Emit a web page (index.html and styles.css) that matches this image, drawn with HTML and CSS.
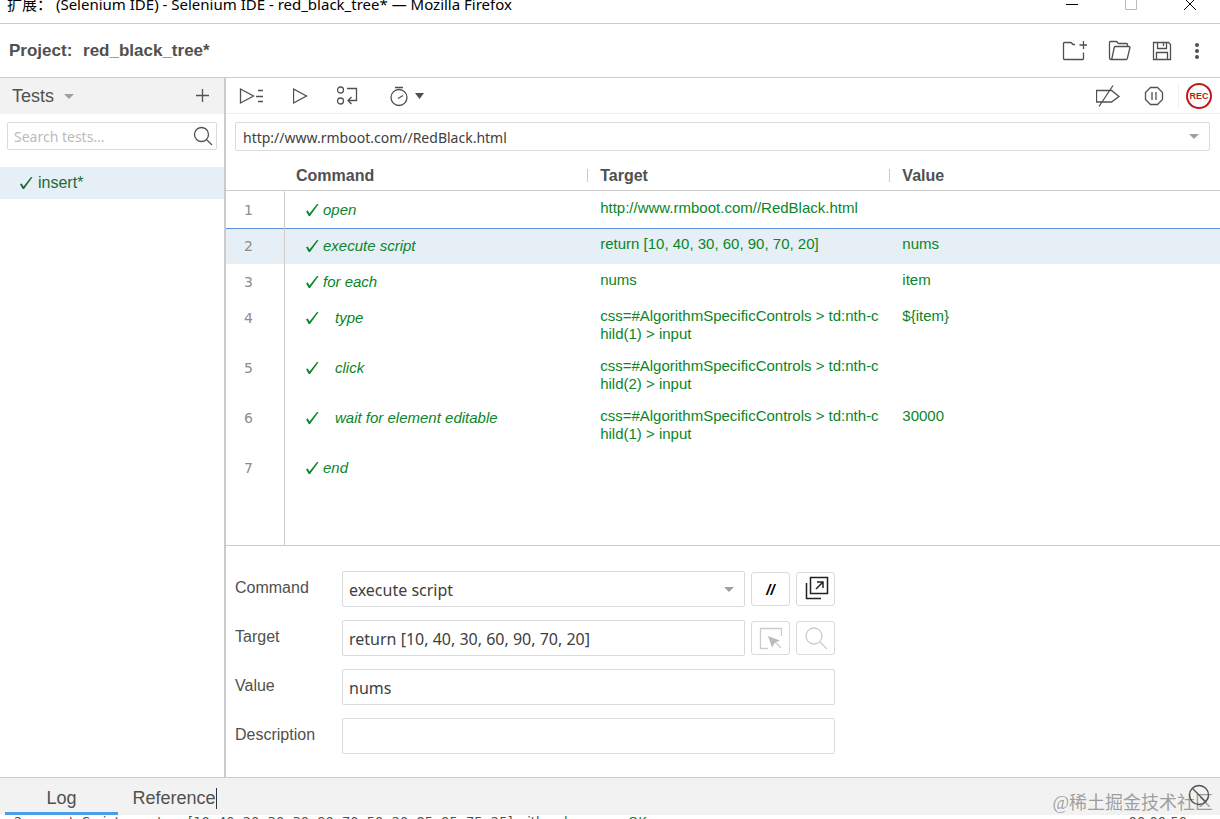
FILE: index.html
```html
<!DOCTYPE html>
<html lang="en">
  <head>
    <meta charset="UTF-8" />
    <meta name="viewport" content="width=device-width, initial-scale=1.0" />
    <title>Selenium IDE - red_black_tree*</title>
    <link rel="stylesheet" href="styles.css">
  </head>
  <body>
    <!-- window title bar -->
    <div class="titlebar">
      <span class="titlebar-text">扩展： (Selenium IDE) - Selenium IDE - red_black_tree* — Mozilla Firefox</span>
      <div class="window-controls">
        <button aria-label="Minimize"><svg width="14" height="14"><path d="M1 7.500h12" /></svg></button>
        <button aria-label="Maximize"><svg class="faded" width="14" height="14"><path d="M1.500 1.500h11v11h-11z" /></svg></button>
        <button aria-label="Close"><svg width="14" height="14"><path d="M1 1l12 12M13 1L1 13" /></svg></button>
      </div>
    </div>

    <!-- project header -->
    <header class="header">
      <h1>Project: <span class="project-name">red_black_tree*</span></h1>
      <div class="header-actions">
        <button aria-label="New project">
          <svg width="26" height="24"><path d="M14 5.500h-2l-2-2H3.500q-1 0-1 1v15q0 1 1 1h18q1 0 1-1v-6M22.500 2v8M18.500 6h8" /></svg>
        </button>
        <button aria-label="Open project">
          <svg width="24" height="24"><path d="M4 20.500q-1.500 0-1.500-2V3.500q0-1 1-1h6l2 2h8q1 0 1 1v2M4 20.500h15q1 0 1.300-1l2.700-11q0-1-1-1H8.500q-1 0-1.300 1L5 19q-.3 1.500-1 1.500" /></svg>
        </button>
        <button aria-label="Save project">
          <svg width="22" height="24"><path d="M2.500 3.500h15l2 2v15h-17zM6.500 3.500v6h9v-6M12.500 4v3M5.500 20.500v-7h11v7" /></svg>
        </button>
        <button aria-label="More">
          <svg width="8" height="24"><g fill="#505050" stroke="none"><circle cx="4" cy="6" r="2" /><circle cx="4" cy="12" r="2" /><circle cx="4" cy="18" r="2" /></g></svg>
        </button>
      </div>
    </header>

    <div class="workspace">
      <!-- tests list -->
      <aside class="sidebar">
        <div class="sidebar-head">
          <button class="tests-menu">Tests <i class="caret"></i></button>
          <button aria-label="Add new test"><svg width="14" height="16"><path d="M7.500 1v13M1 7.500h13" /></svg></button>
        </div>
        <div class="search">
          <input type="text" placeholder="Search tests..." aria-label="Search tests" />
          <svg width="20" height="20"><circle cx="8.500" cy="8.500" r="7" /><path d="M14 14l5 5" /></svg>
        </div>
        <a class="test-item" href="#insert">
          <svg class="check" width="14" height="14"><path d="M1 8.300l1.700-.8L4.500 10.500 12 1l1.500.2L5 13H3.700z" /></svg>insert*
        </a>
      </aside>

      <main class="content">
        <!-- playback toolbar -->
        <div class="toolbar">
          <button aria-label="Run all tests">
            <svg width="26" height="20"><path d="M1.500 3v14l13-7zM19 4.500h5M17 10.500h7M19 15.500h5" /></svg>
          </button>
          <button aria-label="Run current test">
            <svg width="16" height="20"><path d="M.5 3v14l13-7z" /></svg>
          </button>
          <button aria-label="Step over">
            <svg width="22" height="20"><circle cx="3.500" cy="4" r="3" /><circle cx="3.500" cy="15" r="3" /><path d="M10 2.500h9.500v12H11M14.500 11L11 14.500l3.500 3.500" /></svg>
          </button>
          <button aria-label="Test execution speed">
            <svg width="38" height="22"><circle cx="12" cy="12.500" r="8" /><path d="M8 2.500h8M11 13.500l5-3" /><path d="M28 8h9l-4.500 6z" fill="#505050" stroke="none" /></svg>
          </button>
          <div class="toolbar-right">
            <button aria-label="Disable breakpoints">
              <svg width="26" height="24"><path d="M.500 6.500h15l7.500 6-7.500 5.500h-15zM3 22.500L17 1.500" /></svg>
            </button>
            <button class="pause" aria-label="Pause on exceptions">
              <svg width="20" height="20"><path d="M6.500 1.500h7l5 5v7l-5 5h-7l-5-5v-7zM8 6v8M12 6v8" /></svg>
            </button>
            <i class="divider"></i>
            <button class="rec">REC</button>
          </div>
        </div>

        <div class="url">
          <input type="text" value="http://www.rmboot.com//RedBlack.html" aria-label="Playback base URL" />
          <i class="caret"></i>
        </div>

        <!-- test steps -->
        <div class="steps">
          <table>
            <colgroup><col class="col-index" /><col class="col-command" /><col class="col-target" /><col /></colgroup>
            <thead>
              <tr><th></th><th>Command</th><th class="split">Target</th><th class="split">Value</th></tr>
            </thead>
            <tbody>
              <tr class="first">
                <td>1</td>
                <td><svg class="check" width="14" height="14"><path d="M1 8.300l1.700-.8L4.500 10.500 12 1l1.500.2L5 13H3.700z" /></svg>open</td>
                <td>http://www.rmboot.com//RedBlack.html</td>
                <td></td>
              </tr>
              <tr class="selected">
                <td>2</td>
                <td><svg class="check" width="14" height="14"><path d="M1 8.300l1.700-.8L4.500 10.500 12 1l1.500.2L5 13H3.700z" /></svg>execute script</td>
                <td>return [10, 40, 30, 60, 90, 70, 20]</td>
                <td>nums</td>
              </tr>
              <tr>
                <td>3</td>
                <td><svg class="check" width="14" height="14"><path d="M1 8.300l1.700-.8L4.500 10.500 12 1l1.500.2L5 13H3.700z" /></svg>for each</td>
                <td>nums</td>
                <td>item</td>
              </tr>
              <tr class="nested">
                <td>4</td>
                <td><svg class="check" width="14" height="14"><path d="M1 8.300l1.700-.8L4.500 10.500 12 1l1.500.2L5 13H3.700z" /></svg>type</td>
                <td>css=#AlgorithmSpecificControls &gt; td:nth-child(1) &gt; input</td>
                <td>${item}</td>
              </tr>
              <tr class="nested">
                <td>5</td>
                <td><svg class="check" width="14" height="14"><path d="M1 8.300l1.700-.8L4.500 10.500 12 1l1.500.2L5 13H3.700z" /></svg>click</td>
                <td>css=#AlgorithmSpecificControls &gt; td:nth-child(2) &gt; input</td>
                <td></td>
              </tr>
              <tr class="nested">
                <td>6</td>
                <td><svg class="check" width="14" height="14"><path d="M1 8.300l1.700-.8L4.500 10.500 12 1l1.500.2L5 13H3.700z" /></svg>wait for element editable</td>
                <td>css=#AlgorithmSpecificControls &gt; td:nth-child(1) &gt; input</td>
                <td>30000</td>
              </tr>
              <tr>
                <td>7</td>
                <td><svg class="check" width="14" height="14"><path d="M1 8.300l1.700-.8L4.500 10.500 12 1l1.500.2L5 13H3.700z" /></svg>end</td>
                <td></td>
                <td></td>
              </tr>
              <tr class="filler"><td></td><td></td><td></td><td></td></tr>
            </tbody>
          </table>
        </div>

        <!-- selected step editor -->
        <form class="editor">
          <div class="field">
            <label for="command">Command</label>
            <div class="combo">
              <input type="text" id="command" value="execute script" />
              <i class="caret"></i>
            </div>
            <button type="button" class="box comment" aria-label="Enable/Disable command">//</button>
            <button type="button" class="box dark" aria-label="Add new window configuration">
              <svg width="26" height="26"><path d="M7.500 1.500h17v16h-17zM3.500 7v15.500H18M13 13l6.500-6.500M14 6h6v6" /></svg>
            </button>
          </div>
          <div class="field">
            <label for="target">Target</label>
            <input type="text" id="target" value="return [10, 40, 30, 60, 90, 70, 20]" />
            <button type="button" class="box pale" aria-label="Select target in page" disabled>
              <svg width="24" height="24"><path d="M9 22.500H1.500v-20h21V10M15 15l7 7" /><path d="M9 10l12 4.500-5 2-3 5z" fill="#bbb" stroke="none" /></svg>
            </button>
            <button type="button" class="box pale" aria-label="Find target in page" disabled>
              <svg width="24" height="24"><circle cx="10" cy="10" r="8" /><path d="M16 16l7 7" /></svg>
            </button>
          </div>
          <div class="field">
            <label for="value">Value</label>
            <input type="text" id="value" value="nums" />
          </div>
          <div class="field">
            <label for="description">Description</label>
            <input type="text" id="description" />
          </div>
        </form>
      </main>
    </div>

    <!-- log console -->
    <footer class="console">
      <div class="tabs">
        <button class="tab active">Log</button>
        <button class="tab"><span class="tab-label">Reference</span></button>
        <button class="clear" aria-label="Clear log">
          <svg width="22" height="22"><circle cx="11" cy="11" r="9.500" /><path d="M4.500 4.500l13 13" /></svg>
        </button>
      </div>
      <div class="log">
        <span>2. executeScript on return [10, 40, 20, 30, 30, 90, 70, 50, 20, 85, 95, 75, 25] with value nums <b>OK</b></span>
        <time>00:00:50</time>
      </div>
      <div class="watermark">@稀土掘金技术社区</div>
    </footer>
  </body>
</html>
```
FILE: styles.css
```css
* {
  box-sizing: border-box;
}

:root {
  --text: #505050;
  --line: #cbcbcb;
  --field-line: #dadada;
  --green: #0a8529;
  --selected: #e6eef6;
  --panel: #f2f2f2;
  --sans: "Liberation Sans", Arial, sans-serif;
  --ui: "Noto Sans", "Noto Sans CJK SC", sans-serif;
}

body {
  margin: 0;
  height: 100vh;
  display: flex;
  flex-direction: column;
  overflow: hidden;
  background: #fff;
  color: var(--text);
  font-family: var(--sans);
  font-size: 16px;
}

button {
  display: flex;
  align-items: center;
  justify-content: center;
  padding: 0;
  border: 0;
  background: none;
  color: inherit;
  font: inherit;
}

input {
  width: 100%;
  min-width: 0;
  border: 1px solid var(--field-line);
  border-radius: 2px;
  background: #fff;
  color: #404040;
  font-family: var(--ui);
}

svg {
  display: block;
  flex: none;
  fill: none;
  stroke: var(--text);
  stroke-width: 1.3;
}

.caret {
  border: 5px solid transparent;
  border-top-color: #a0a0a0;
  border-bottom: 0;
}

/* window title bar */
.titlebar {
  flex: none;
  display: flex;
  align-items: flex-end;
  justify-content: space-between;
  height: 24px;
  padding: 0 23px 9px 7px;
  border-bottom: 1px solid var(--line);
  overflow: hidden;
  color: #000;
  font-family: var(--ui);
  font-size: 15px;
  line-height: 20px;
}

.window-controls {
  display: flex;
  gap: 45px;
  margin-bottom: 3px;
}

.window-controls svg {
  stroke: #000;
  stroke-width: 1;
}

.window-controls .faded {
  stroke: #bbb;
}

/* project header */
.header {
  flex: none;
  display: flex;
  align-items: center;
  justify-content: space-between;
  height: 54px;
  padding: 0 19px 0 9px;
  border-bottom: 1px solid var(--line);
}

.header h1 {
  margin: 0;
  font-size: 17px;
}

.project-name {
  margin-left: 6px;
}

.header-actions {
  display: flex;
  gap: 20px;
}

.workspace {
  flex: 1;
  display: flex;
  min-height: 0;
}

/* tests list */
.sidebar {
  flex: none;
  width: 226px;
  border-right: 2px solid var(--line);
}

.sidebar-head {
  display: flex;
  align-items: center;
  justify-content: space-between;
  height: 36px;
  padding: 0 15px 0 12px;
  background: var(--panel);
}

.tests-menu {
  gap: 10px;
  font-size: 18px;
}

.search {
  display: flex;
  align-items: center;
  position: relative;
  margin: 8px 7px 17px;
}

.search input {
  height: 28px;
  padding: 0 30px 0 6px;
  font-size: 14px;
}

.search input::placeholder {
  color: #bbb;
}

.search svg {
  position: absolute;
  right: 4px;
}

.test-item {
  display: flex;
  align-items: center;
  gap: 5px;
  height: 32px;
  padding-left: 19px;
  background: var(--selected);
  color: #1b6b35;
  line-height: 20px;
  text-decoration: none;
}

.check {
  fill: var(--green);
  stroke: none;
}

.test-item .check {
  fill: #1b6b35;
}

/* playback toolbar */
.content {
  flex: 1;
  display: flex;
  flex-direction: column;
  min-width: 0;
}

.toolbar {
  flex: none;
  display: flex;
  align-items: center;
  gap: 28px;
  height: 36px;
  padding: 0 8px 0 13px;
  border-bottom: 1px solid #eee;
}

.toolbar-right {
  display: flex;
  align-items: center;
  margin-left: auto;
}

.pause {
  margin-left: 22px;
}

.divider {
  width: 1px;
  height: 24px;
  margin: 0 7px 0 14px;
  background: #eee;
}

.rec {
  width: 26px;
  height: 26px;
  border: 2px solid #c01818;
  border-radius: 50%;
  color: #c01818;
  font-size: 9px;
  font-weight: bold;
}

.url,
.combo {
  display: flex;
  align-items: center;
  position: relative;
}

.url {
  flex: none;
  margin: 8px 10px 9px 9px;
}

.url input {
  height: 29px;
  padding: 1px 30px 0 7px;
  font-size: 14px;
}

.url .caret,
.combo .caret {
  position: absolute;
  right: 11px;
}

/* test steps */
.steps {
  flex: 1;
  min-height: 0;
  overflow: hidden;
  border-bottom: 1px solid var(--line);
}

.steps table {
  width: 100%;
  height: 100%;
  table-layout: fixed;
  border-collapse: separate;
  border-spacing: 0;
}

.col-index {
  width: 59px;
}

.col-command,
.col-target {
  width: 30.4%;
}

.steps th {
  height: 31px;
  padding: 2px 11px 0;
  border-bottom: 1px solid var(--line);
  text-align: left;
}

.steps th.split {
  padding-left: 13px;
  background: linear-gradient(var(--line), var(--line)) left center / 1px 13px no-repeat;
}

.steps td {
  height: 36px;
  padding: 7px 10px 7px 13px;
  color: var(--green);
  font-size: 15px;
  line-height: 18px;
  vertical-align: top;
  word-break: break-all;
}

.steps td:first-child {
  padding: 7px 0 7px 18px;
  border-right: 1px solid var(--line);
  color: #8c8c8c;
  font-family: "DejaVu Sans", sans-serif;
  font-size: 14px;
  line-height: 22px;
}

.steps td:nth-child(2) {
  padding-left: 20px;
  font-style: italic;
  line-height: 22px;
}

.steps td .check {
  display: inline-block;
  margin-right: 4px;
  vertical-align: -2px;
}

.steps .nested .check {
  margin-right: 16px;
}

.steps .first td {
  height: 37px;
  border-top: 1px solid transparent;
}

.steps .selected td {
  background: var(--selected);
  box-shadow: inset 0 1px #5b8fd6;
}

.steps .filler td {
  height: 100%;
  padding: 0;
}

/* selected step editor */
.editor {
  flex: none;
  display: flex;
  flex-direction: column;
  gap: 13px;
  width: 100%;
  max-width: 618px;
  padding: 25px 9px 23px;
}

.field {
  display: flex;
  align-items: center;
  gap: 6px;
}

.field label {
  flex: none;
  width: 101px;
  padding-bottom: 2px;
}

.combo {
  flex: 1;
}

.field input {
  height: 36px;
  padding: 1px 6px 0;
  font-size: 16px;
}

.box {
  flex: none;
  width: 39px;
  height: 34px;
  border: 1px solid var(--field-line);
  border-radius: 3px;
}

.comment {
  color: #000;
  font-size: 15px;
  font-style: italic;
  font-weight: bold;
}

.dark svg {
  stroke: #222;
  stroke-width: 1.5;
}

.pale svg {
  stroke: #ccc;
}

/* log console */
.console {
  flex: none;
  position: relative;
  height: 42px;
  border-top: 1px solid var(--line);
  overflow: hidden;
}

.tabs {
  display: flex;
  height: 37px;
  padding: 0 10px 0 5px;
  background: var(--panel);
}

.tab {
  width: 113px;
  padding-top: 6px;
  border-bottom: 3px solid transparent;
  font-size: 18px;
}

.tab.active {
  border-bottom-color: #4a9de8;
}

.tab-label {
  border-right: 1px solid #333;
}

.clear {
  position: relative;
  z-index: 1;
  margin-left: auto;
  padding-bottom: 3px;
}

.log {
  display: flex;
  justify-content: space-between;
  padding: 0 33px 0 14px;
  font-family: "DejaVu Sans", sans-serif;
  font-size: 13px;
  line-height: 14px;
  white-space: nowrap;
}

.log b {
  color: var(--green);
  font-weight: normal;
}

.watermark {
  position: absolute;
  right: 7px;
  bottom: 4px;
  color: rgba(100, 100, 100, 0.6);
  font-family: "Liberation Serif", "Noto Sans CJK SC", serif;
  font-size: 18px;
  line-height: 24px;
  pointer-events: none;
}
```
